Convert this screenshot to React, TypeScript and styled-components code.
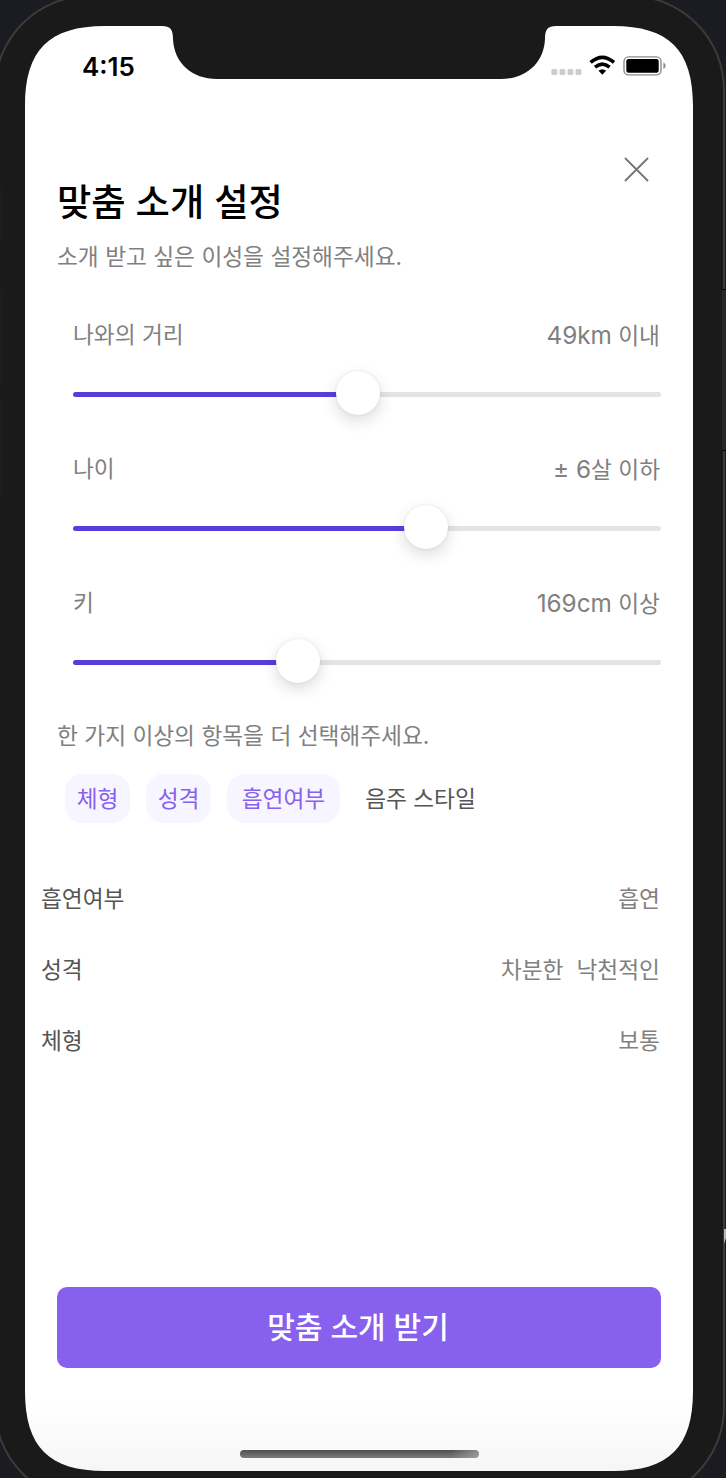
import React from "react";
import styled, { createGlobalStyle } from "styled-components";

const GlobalStyle = createGlobalStyle`
  *, *::before, *::after { box-sizing: border-box; }
  body { margin: 0; background: #1b1c21; overflow: hidden; }
  button { font: inherit; border: 0; padding: 0; background: none; }
  h1, p { margin: 0; font-weight: inherit; }
`;

const SCREEN_W = 668;
const SCREEN_H = 1445;

/* Rounded screen with the sensor notch cut from its top edge. */
const screenOutline = () => {
  const a = 80;
  const k = 24;
  const w = SCREEN_W;
  const h = SCREEN_H;
  return [
    `M0 ${a}C0 ${k} ${k} 0 ${a} 0`,
    "H137C145 0 148 3 148 13C149 37 167 53 192 53H476C501 53 519 37 520 13C520 3 523 0 531 0",
    `H${w - a}C${w - k} 0 ${w} ${k} ${w} ${a}`,
    `V${h - a}C${w} ${h - k} ${w - k} ${h} ${w - a} ${h}`,
    `H${a}C${k} ${h} 0 ${h - k} 0 ${h - a}Z`,
  ].join("");
};

const Stage = styled.div`
  position: relative;
  width: 726px;
  height: 1478px;
  overflow: hidden;
  background: #1b1c21;
`;

const Device = styled.div`
  width: 731px;
  height: 1507px;
  margin: -5px 0 0 -6px;
  padding: 29px 29px;
  border: 2px solid #3b3b3c;
  border-radius: 95px;
  background: #1a1a1a;
`;

const SideKey = styled.i<{ $side: "left" | "right"; $top: number; $height: number }>`
  position: absolute;
  ${(p) => p.$side}: ${(p) => (p.$side === "left" ? 1 : 0)}px;
  top: ${(p) => p.$top}px;
  width: ${(p) => (p.$side === "left" ? 1 : 4)}px;
  height: ${(p) => p.$height}px;
  background: ${(p) => (p.$side === "left" ? "#222" : "#272727")};
  border-block: ${(p) => (p.$side === "left" ? "0" : "1px solid #050505")};
`;

const Glint = styled.i`
  position: absolute;
  right: 0;
  top: 1229px;
  width: 2px;
  height: 15px;
  background: #b5b5b5;
  clip-path: polygon(0 0, 100% 0, 100% 60%, 0 100%);
`;

const Screen = styled.main`
  display: flex;
  flex-direction: column;
  width: ${SCREEN_W}px;
  height: ${SCREEN_H}px;
  background: linear-gradient(#fff 0 1375px, #f6f6f6 1445px);
  clip-path: path("${screenOutline()}");
  color: #808080;
  font-family: Inter, "Noto Sans CJK KR", sans-serif;
  font-size: 22.7px;
  line-height: 34px;
  white-space: nowrap;
`;

const StatusBar = styled.div`
  display: flex;
  justify-content: space-between;
  align-items: center;
  height: 82px;
  padding: 0 27px 0 57px;
`;

const Clock = styled.span`
  color: #000;
  font-size: 26px;
  font-weight: 600;
`;

const Indicators = styled.svg`
  width: 115px;
  height: 24px;
`;

const Header = styled.header`
  display: flex;
  justify-content: space-between;
  height: 192px;
  padding: 44px 40px 0 32px;
`;

const Heading = styled.div`
  padding-top: 23px;
`;

const Title = styled.h1`
  color: #000;
  font-size: 37.3px;
  font-weight: 500;
  line-height: 56px;
`;

const Lead = styled.p`
  margin-top: 9px;
`;

const CloseButton = styled.button`
  width: 32px;
  height: 32px;
  svg { display: block; }
`;

const Sliders = styled.section`
  display: flex;
  flex-direction: column;
  padding: 18px 32px 0 48px;
`;

const SliderField = styled.div`
  height: 134px;
`;

const SliderLabels = styled.div`
  display: flex;
  justify-content: space-between;
  height: 34px;
`;

const Value = styled.span`
  padding-right: 1px;
`;

const Amount = styled.span`
  font-size: 24.3px;
`;

const Track = styled.div<{ $fill: number }>`
  display: flex;
  align-items: center;
  height: 5px;
  margin-top: 40px;
  border-radius: 3px;
  background: linear-gradient(to right, #573edb ${(p) => p.$fill}px, #e4e4e5 ${(p) => p.$fill}px);
`;

const Thumb = styled.div<{ $at: number }>`
  flex: none;
  width: 44px;
  height: 44px;
  margin: -3px 0 0 ${(p) => p.$at - 22}px;
  border-radius: 50%;
  background: #fff;
  box-shadow: 0 6px 16px rgba(0, 0, 0, 0.14), 0 0 3px rgba(0, 0, 0, 0.09);
`;

const Hint = styled.p`
  margin-top: -1px;
  padding: 0 32px;
`;

const Chips = styled.div`
  display: flex;
  gap: 16px;
  padding: 21px 40px 0;
`;

const Chip = styled.button<{ $selected: boolean; $width: number }>`
  width: ${(p) => p.$width}px;
  height: 49px;
  border-radius: 18px;
  background: ${(p) => (p.$selected ? "#f7f5ff" : "transparent")};
  color: ${(p) => (p.$selected ? "#8761ed" : "#555")};
`;

const Choices = styled.dl`
  display: flex;
  flex-direction: column;
  gap: 37px;
  margin: 0;
  padding: 59px 33px 0 16px;
`;

const Choice = styled.div`
  display: flex;
  justify-content: space-between;
  dt { color: #555; }
  dd { display: flex; gap: 13px; margin: 0; }
`;

const Submit = styled.button`
  height: 81px;
  margin: auto 32px 0;
  padding: 0 2px 2px 0;
  border-radius: 10px;
  background: #8761ed;
  color: #fff;
  font-size: 30px;
  font-weight: 500;
`;

const HomeBar = styled.div`
  width: 239px;
  height: 8px;
  margin: 82px auto 13px;
  border-radius: 4px;
  background: linear-gradient(to right, transparent 88%, rgba(180, 180, 180, 0.6)), linear-gradient(#505050, #7c7c7c);
`;

const sliders = [
  { label: "나와의 거리", amount: "49km", bound: " 이내", at: 285 },
  { label: "나이", amount: "± 6", bound: "살 이하", at: 353 },
  { label: "키", amount: "169cm", bound: " 이상", at: 225 },
];

const chips = [
  { label: "체형", width: 65, selected: true },
  { label: "성격", width: 65, selected: true },
  { label: "흡연여부", width: 113, selected: true },
  { label: "음주 스타일", width: 129, selected: false },
];

const choices = [
  { label: "흡연여부", values: ["흡연"] },
  { label: "성격", values: ["차분한", "낙천적인"] },
  { label: "체형", values: ["보통"] },
];

export default function App() {
  return (
    <Stage>
      <GlobalStyle />
      <Device>
        <Screen>
          <StatusBar>
            <Clock>4:15</Clock>
            <Indicators viewBox="0 0 115 24" aria-label="Wi-Fi, battery">
              {[0, 8, 16, 24].map((x) => (
                <rect key={x} x={x + 0.4} y="14" width="6" height="6" rx="1.6" fill="#ccc" />
              ))}
              <g fill="none" stroke="#000" strokeWidth="3.6">
                <path d="M39.6 7.4Q51.3-2.8 63 7.4" />
                <path d="M44 12.1Q51.3 6 58.6 12.1" />
              </g>
              <path d="M47.5 15.8Q51.3 12.8 55.1 15.8L51.3 19.8Z" />
              <rect x="73" y="1.9" width="37" height="18" rx="4.5" fill="none" stroke="#8c8c8c" strokeWidth="1.4" />
              <rect x="75.3" y="4" width="32.4" height="13.8" rx="2.2" />
              <path d="M112.4 7.6Q114.7 8.5 114.7 10.8T112.4 14Z" fill="#8c8c8c" />
            </Indicators>
          </StatusBar>
          <Header>
            <Heading>
              <Title>맞춤 소개 설정</Title>
              <Lead>소개 받고 싶은 이성을 설정해주세요.</Lead>
            </Heading>
            <CloseButton aria-label="닫기">
              <svg width="32" height="32" viewBox="0 0 32 32" fill="none" stroke="#777" strokeWidth="1.9" strokeLinecap="round">
                <path d="M4.5 6.5L26.5 28.5M26.5 6.5L4.5 28.5" />
              </svg>
            </CloseButton>
          </Header>
          <Sliders>
            {sliders.map((s) => (
              <SliderField key={s.label}>
                <SliderLabels>
                  <span>{s.label}</span>
                  <Value>
                    <Amount>{s.amount}</Amount>
                    {s.bound}
                  </Value>
                </SliderLabels>
                <Track $fill={s.at}>
                  <Thumb $at={s.at} />
                </Track>
              </SliderField>
            ))}
          </Sliders>
          <Hint>한 가지 이상의 항목을 더 선택해주세요.</Hint>
          <Chips>
            {chips.map((c) => (
              <Chip key={c.label} $selected={c.selected} $width={c.width}>{c.label}</Chip>
            ))}
          </Chips>
          <Choices>
            {choices.map((c) => (
              <Choice key={c.label}>
                <dt>{c.label}</dt>
                <dd>{c.values.map((v) => <span key={v}>{v}</span>)}</dd>
              </Choice>
            ))}
          </Choices>
          <Submit>맞춤 소개 받기</Submit>
          <HomeBar />
        </Screen>
      </Device>
      <SideKey $side="left" $top={188} $height={52} />
      <SideKey $side="left" $top={290} $height={95} />
      <SideKey $side="left" $top={400} $height={95} />
      <SideKey $side="right" $top={289} $height={162} />
      <Glint />
    </Stage>
  );
}
